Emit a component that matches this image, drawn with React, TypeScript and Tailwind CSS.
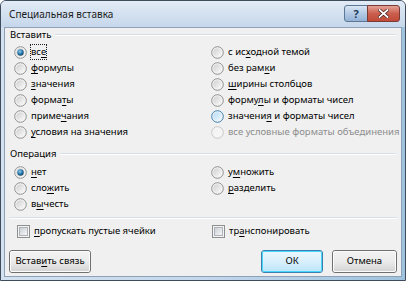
import React from 'react'

type Opt = { pre: string; key: string; post: string; state?: 'on' | 'hover' | 'off' | 'disabled'; focus?: boolean }

const Label = ({ o }: { o: Opt }) => (
  <span className="whitespace-nowrap">
    {o.pre}
    {o.key && <span className="underline decoration-1 underline-offset-[2px]">{o.key}</span>}
    {o.post}
  </span>
)

const Radio = ({ state = 'off' }: { state?: Opt['state'] }) => {
  const ring = state === 'hover' ? '#3c7fb1' : state === 'disabled' ? '#c9c9c9' : '#8e8f8f'
  const id = 'r' + state
  return (
    <svg width="13" height="13" viewBox="0 0 13 13" className="shrink-0">
      <defs>
        <linearGradient id={id + 'f'} x1="0" y1="0" x2="1" y2="1">
          {state === 'hover' ? (
            <>
              <stop offset="0" stopColor="#b4dcf7" />
              <stop offset="1" stopColor="#f2f9fe" />
            </>
          ) : state === 'disabled' ? (
            <>
              <stop offset="0" stopColor="#f2f2f2" />
              <stop offset="1" stopColor="#f7f7f7" />
            </>
          ) : (
            <>
              <stop offset="0" stopColor="#cfcfcf" />
              <stop offset="1" stopColor="#fbfbfb" />
            </>
          )}
        </linearGradient>
        <radialGradient id={id + 'd'} cx="0.4" cy="0.35" r="0.7">
          <stop offset="0" stopColor="#8fd2f5" />
          <stop offset="0.55" stopColor="#2a77a8" />
          <stop offset="1" stopColor="#0e3d5c" />
        </radialGradient>
      </defs>
      <circle cx="6.5" cy="6.5" r="5.8" fill="#f4f4f4" stroke={ring} strokeWidth="1" />
      <circle cx="6.5" cy="6.5" r="4.3" fill={`url(#${id}f)`} />
      {state === 'on' && <circle cx="6.5" cy="6.5" r="3.2" fill={`url(#${id}d)`} />}
    </svg>
  )
}

const Check = () => (
  <span className="w-[13px] h-[13px] shrink-0 border border-[#8e8f8f] bg-[#f4f4f4] flex items-center justify-center">
    <span className="w-[9px] h-[9px] border border-[#aeb3b9] bg-gradient-to-br from-[#cbcfd5] to-[#f7f7f7]" />
  </span>
)

const Row = ({ o, left }: { o: Opt; left?: boolean }) => (
  <div className={`h-[16px] flex items-center ${left ? 'pl-[9px]' : 'pl-[3px]'}`}>
    <Radio state={o.state} />
    <div
      className={`ml-[3px] px-[1px] h-[16px] flex items-center leading-[14px] ${
        o.focus ? 'outline-1 outline-dotted outline-[#222] -outline-offset-1' : ''
      } ${o.state === 'disabled' ? 'text-[#8d8d8d]' : ''}`}
    >
      <Label o={o} />
    </div>
  </div>
)

const Header = ({ text }: { text: string }) => (
  <div className="h-[14px] flex items-center pl-[5px] pr-[5px] leading-[14px]">
    <span>{text}</span>
    <div className="flex-1 ml-[4px] h-[2px] border-t border-[#d5dfe5] border-b border-b-white" />
  </div>
)

const Button = ({ children, def, w }: { children: React.ReactNode; def?: boolean; w: string }) => (
  <div
    className={`${w} h-[23px] rounded-[3px] border ${
      def ? 'border-[#3c7fb1]' : 'border-[#707070]'
    } flex`}
  >
    <div
      className={`flex-1 rounded-[2px] flex items-center justify-center border whitespace-nowrap ${
        def
          ? 'border-[#48d7f8] bg-gradient-to-b from-[#eaf6fd] via-[#d9f0fc] to-[#bee6fd]'
          : 'border-[#fcfcfc] bg-gradient-to-b from-[#f2f2f2] via-[#ebebeb] to-[#d5d5d5]'
      }`}
    >
      {children}
    </div>
  </div>
)

const left: Opt[] = [
  { pre: 'вс', key: 'е', post: '', state: 'on', focus: true },
  { pre: '', key: 'ф', post: 'ормулы' },
  { pre: '', key: 'з', post: 'начения' },
  { pre: 'форма', key: 'т', post: 'ы' },
  { pre: 'приме', key: 'ч', post: 'ания' },
  { pre: '', key: 'у', post: 'словия на значения' },
]

const right: Opt[] = [
  { pre: 'с ис', key: 'х', post: 'одной темой' },
  { pre: 'без рам', key: 'к', post: 'и' },
  { pre: '', key: 'ш', post: 'ирины столбцов' },
  { pre: 'форму', key: 'л', post: 'ы и форматы чисел' },
  { pre: 'значени', key: 'я', post: ' и форматы чисел', state: 'hover' },
  { pre: 'все условные форматы объединения', key: '', post: '', state: 'disabled' },
]

const opLeft: Opt[] = [
  { pre: '', key: 'н', post: 'ет', state: 'on' },
  { pre: 'сло', key: 'ж', post: 'ить' },
  { pre: 'в', key: 'ы', post: 'честь' },
]

const opRight: Opt[] = [
  { pre: 'у', key: 'м', post: 'ножить' },
  { pre: '', key: 'р', post: 'азделить' },
]

export default function App() {
  return (
    <div className="w-[406px] h-[281px] flex flex-col rounded-t-[6px] border border-[#3e4c5c] bg-gradient-to-r from-[#d3e1f0] via-[#c4d7ec] to-[#9fc3de] text-[9.5px] text-black font-['Noto_Sans',sans-serif]">
      {/* Title bar */}
      <div className="h-[26px] flex items-start pl-[8px] pr-[5px] rounded-t-[5px] bg-gradient-to-b from-[#e2ebf6] to-[#c6d7eb]">
        <span className="mt-[5px] leading-[16px] text-[10px] text-[#1b1b1b]">Специальная вставка</span>
        <div className="ml-auto mt-[4px] flex">
          <div className="w-[24px] h-[17px] rounded-l-[3px] border border-[#5d7896] bg-gradient-to-b from-[#d9e5f3] via-[#b3cae4] to-[#94b2d6] flex items-center justify-center">
            <span className="text-[11px] font-bold leading-none text-[#203b5c]">?</span>
          </div>
          <div className="w-[33px] h-[17px] -ml-px rounded-r-[3px] border border-[#7a3a36] bg-gradient-to-b from-[#e3a196] via-[#cb5e4e] to-[#c24a38] flex items-center justify-center">
            <svg width="11" height="9" viewBox="0 0 11 9">
              <path d="M1.5 1 L9.5 8 M9.5 1 L1.5 8" stroke="#3a1a18" strokeWidth="3.2" strokeLinecap="square" />
              <path d="M1.5 1 L9.5 8 M9.5 1 L1.5 8" stroke="#ffffff" strokeWidth="1.8" strokeLinecap="square" />
            </svg>
          </div>
        </div>
      </div>

      {/* Client area */}
      <div className="flex-1 mx-[3px] mb-[3px] border border-[#8da2b8] bg-[#f0f0f0] flex flex-col">
        <Header text="Вставить" />
        <div className="mt-[2px] grid grid-cols-[203px_1fr]">
          <div>
            {left.map((o, i) => (
              <Row key={i} o={o} left />
            ))}
          </div>
          <div>
            {right.map((o, i) => (
              <Row key={i} o={o} />
            ))}
          </div>
        </div>

        <div className="mt-[7px]">
          <Header text="Операция" />
        </div>
        <div className="mt-[3px] grid grid-cols-[203px_1fr]">
          <div>
            {opLeft.map((o, i) => (
              <Row key={i} o={o} left />
            ))}
          </div>
          <div>
            {opRight.map((o, i) => (
              <Row key={i} o={o} />
            ))}
          </div>
        </div>

        <div className="mt-[5px] mx-[4px] h-[2px] border-t border-[#d5dfe5] border-b border-b-white" />

        <div className="mt-[4px] grid grid-cols-[203px_1fr] h-[16px]">
          <div className="flex items-center pl-[12px] gap-[4px]">
            <Check />
            <span className="whitespace-nowrap">
              <span className="underline decoration-1 underline-offset-[2px]">п</span>ропускать пустые ячейки
            </span>
          </div>
          <div className="flex items-center pl-[4px] gap-[4px]">
            <Check />
            <span className="whitespace-nowrap">
              тр<span className="underline decoration-1 underline-offset-[2px]">а</span>нспонировать
            </span>
          </div>
        </div>

        <div className="mt-[11px] flex items-center px-[4px]">
          <Button w="w-[82px]">
            <span>
              Встав<span className="underline decoration-1 underline-offset-[2px]">и</span>ть связь
            </span>
          </Button>
          <div className="ml-auto flex gap-[9px]">
            <Button w="w-[62px]" def>
              <span>ОК</span>
            </Button>
            <Button w="w-[65px]">
              <span>Отмена</span>
            </Button>
          </div>
        </div>
      </div>
    </div>
  )
}
